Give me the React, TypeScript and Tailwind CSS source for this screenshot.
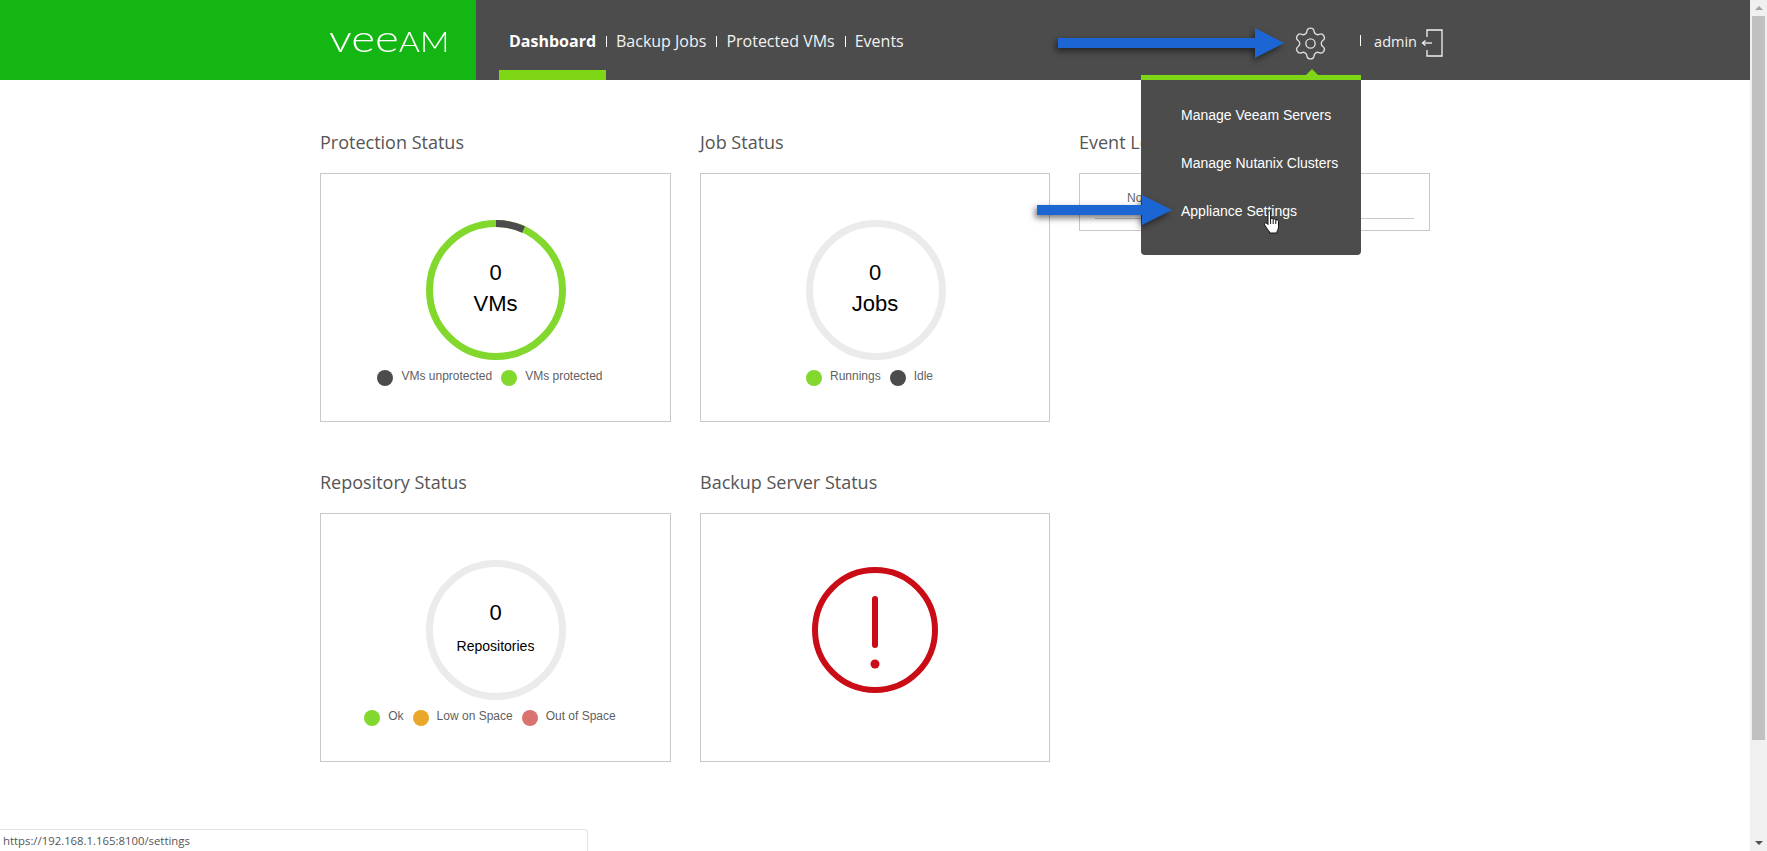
import { Settings } from "lucide-react";

const openSans = "font-['Open_Sans',sans-serif]";
const arial = "font-['Liberation_Sans',Arial,sans-serif]";

function Ring({ slice }: { slice?: boolean }) {
  const r = 66.5;
  const c = 2 * Math.PI * r;
  return (
    <svg width="140" height="140" viewBox="0 0 140 140" className="block">
      <circle cx="70" cy="70" r={r} fill="none" stroke={slice ? "#82d82d" : "#ebebeb"} strokeWidth="7" />
      {slice && (
        <circle
          cx="70"
          cy="70"
          r={r}
          fill="none"
          stroke="#4c4c4c"
          strokeWidth="7"
          strokeDasharray={`${c * 0.068} ${c}`}
          transform="rotate(-90 70 70)"
        />
      )}
    </svg>
  );
}

function Legend({ items }: { items: { color: string; label: string }[] }) {
  return (
    <div className="flex items-center gap-[9px] pr-[11px] mt-[9px] h-[17px]">
      {items.map((it) => (
        <div key={it.label} className="flex items-center gap-[8px]">
          <span className={`w-[16px] h-[16px] rounded-full ${it.color}`} />
          <span className={`${arial} text-[12px] leading-[17px] pb-[3px] text-[#5f5f5f]`}>{it.label}</span>
        </div>
      ))}
    </div>
  );
}

function StatCard({
  count,
  label,
  small,
  slice,
  nudge,
  items,
}: {
  count: string;
  label: string;
  small?: boolean;
  slice?: boolean;
  nudge?: boolean;
  items: { color: string; label: string }[];
}) {
  return (
    <div className="h-[249px] border border-[#c8c8c8] flex flex-col items-center pt-[46px]">
      <div className={`relative w-[140px] h-[140px] ${nudge ? "ml-[2px]" : ""}`}>
        <Ring slice={slice} />
        <div className={`absolute inset-0 flex flex-col items-center pt-[38px] text-black ${arial} ${nudge ? "pr-[2px]" : ""}`}>
          <span className="text-[22px] leading-[30px]">{count}</span>
          {small ? (
            <span className="text-[14px] leading-[30px] mt-[3px]">{label}</span>
          ) : (
            <span className="text-[22px] leading-[30px] mt-[1px]">{label}</span>
          )}
        </div>
      </div>
      <Legend items={items} />
    </div>
  );
}

function Panel({ title, children }: { title: string; children: React.ReactNode }) {
  return (
    <div>
      <h3 className={`${openSans} text-[18px] leading-[24px] mb-[19px] text-[#555555]`}>{title}</h3>
      {children}
    </div>
  );
}

function BlueArrow({ width, shaft }: { width: number; shaft: number }) {
  return (
    <svg width={width + 8} height="40" viewBox={`0 0 ${width + 8} 40`} className="drop-shadow-[-2px_3px_3px_rgba(0,0,0,0.55)]">
      <path d={`M0 10 H${shaft} V0 L${width} 15 L${shaft} 30 V20 H0 Z`} fill="#1c66d4" />
    </svg>
  );
}

export default function App() {
  return (
    <div className="relative flex h-screen overflow-hidden bg-white">
      <div className="flex-1 min-w-0">
        {/* top bar */}
        <header className="flex h-20 bg-[#4c4c4c]">
          <div className="w-[476px] bg-[#14b614] flex justify-end items-center pr-[27px] pb-[7px]">
            <div className="flex items-baseline font-['Lato',sans-serif] font-light text-white leading-none scale-x-[1.2] origin-right">
              <span className="text-[38px]">vee</span>
              <span className="text-[27px]">AM</span>
            </div>
          </div>
          <nav className={`flex items-start pl-[23px] text-white text-[16px] ${openSans}`}>
            <div className="relative h-20 w-[107px] pl-[10px] pt-[29px] leading-[24px] font-bold">
              Dashboard
              <span className="absolute left-0 right-0 bottom-0 h-[10px] bg-[#7ed616]" />
            </div>
            <span className="w-px h-[11px] bg-white mt-[36px]" />
            <span className="pl-[9px] pr-[10px] pt-[29px] leading-[24px] text-[#f2f2f2]">Backup Jobs</span>
            <span className="w-px h-[11px] bg-white mt-[36px]" />
            <span className="pl-[9px] pr-[10px] pt-[29px] leading-[24px] text-[#f2f2f2]">Protected VMs</span>
            <span className="w-px h-[11px] bg-white mt-[36px]" />
            <span className="pl-[9px] pt-[29px] leading-[24px] text-[#f2f2f2]">Events</span>
          </nav>
          <div className="ml-auto flex items-start pr-[307px]">
            <Settings size={37} strokeWidth={0.9} className="mt-[25px] mr-[31px] text-[#dcdcdc]" />
            <span className="w-px h-[11px] bg-white mt-[35px]" />
            <span className={`${openSans} text-[14.5px] leading-[20px] mt-[32px] ml-[13px] text-[#f2f2f2]`}>admin</span>
            <svg width="22" height="28" viewBox="0 0 22 28" className="mt-[29px] ml-[4px]" fill="none" stroke="#f2f2f2" strokeWidth="1.3">
              <path d="M6 8 V1 H21 V27 H6 V21" />
              <path d="M1.5 14 H11" />
              <path d="M4.5 11.5 L1.5 14 L4.5 16.5" />
            </svg>
          </div>
        </header>

        {/* dashboard panels */}
        <main className="w-[1110px] mx-auto pt-[50px] grid grid-cols-[351px_350px_351px] gap-x-[29px] gap-y-[48px] items-start">
          <Panel title="Protection Status">
            <StatCard
              count="0"
              label="VMs"
              slice
              items={[
                { color: "bg-[#4c4c4c]", label: "VMs unprotected" },
                { color: "bg-[#82d82d]", label: "VMs protected" },
              ]}
            />
          </Panel>
          <Panel title="Job Status">
            <StatCard
              count="0"
              label="Jobs"
              nudge
              items={[
                { color: "bg-[#82d82d]", label: "Runnings" },
                { color: "bg-[#4c4c4c]", label: "Idle" },
              ]}
            />
          </Panel>
          <Panel title="Event Log">
            <div className="h-[58px] border border-[#c8c8c8] px-[15px]">
              <div className={`${arial} h-[45px] border-b border-[#c8c8c8] text-[12px] text-[#666666] pl-[32px] pt-[16px] leading-[16px]`}>
                No data available
              </div>
            </div>
          </Panel>
          <Panel title="Repository Status">
            <StatCard
              count="0"
              label="Repositories"
              small
              items={[
                { color: "bg-[#82d82d]", label: "Ok" },
                { color: "bg-[#eaa82a]", label: "Low on Space" },
                { color: "bg-[#d87370]", label: "Out of Space" },
              ]}
            />
          </Panel>
          <Panel title="Backup Server Status">
            <div className="h-[249px] border border-[#c8c8c8] flex items-center justify-center pb-[15px]">
              <svg width="126" height="126" viewBox="0 0 126 126" fill="none" stroke="#c90c16">
                <circle cx="63" cy="63" r="60" strokeWidth="6" />
                <path d="M63 32 V78" strokeWidth="6" strokeLinecap="round" />
                <circle cx="63" cy="97" r="4.5" fill="#c90c16" stroke="none" />
              </svg>
            </div>
          </Panel>
        </main>
      </div>

      {/* scrollbar */}
      <div className="w-[17px] shrink-0 bg-[#f0f0f0] flex flex-col items-center">
        <div className="h-4 w-full flex items-center justify-center">
          <span className="w-0 h-0 border-x-[4px] border-x-transparent border-b-[4px] border-b-[#a3a3a3]" />
        </div>
        <div className="w-[13px] h-[724px] bg-[#c0c0c0]" />
        <div className="mt-auto h-4 w-full flex items-center justify-center">
          <span className="w-0 h-0 border-x-[4px] border-x-transparent border-t-[4px] border-t-[#505050]" />
        </div>
      </div>

      {/* text that sits behind the top arrow */}
      <span className={`${openSans} absolute left-[1120px] top-[34px] text-[13px] leading-[18px] text-[#c8c8c8]`}>
        Version 2.0.0.000
      </span>

      {/* settings menu */}
      <div className="absolute left-[1141px] top-[75px] w-[220px] h-[180px] bg-[#4c4c4c] border-t-[5px] border-[#7ed616] rounded-b-[4px] pt-[11px]">
        <span className="absolute left-[165px] -top-[11px] w-0 h-0 border-x-[6px] border-x-transparent border-b-[6px] border-b-[#7ed616]" />
        {["Manage Veeam Servers", "Manage Nutanix Clusters", "Appliance Settings"].map((item) => (
          <div key={item} className={`${arial} pl-[40px] h-[48px] leading-[48px] text-[14px] text-white`}>
            {item}
          </div>
        ))}
      </div>

      {/* callout arrows */}
      <div className="absolute left-[1058px] top-[28px]">
        <BlueArrow width={226} shaft={197} />
      </div>
      <div className="absolute left-[1037px] top-[195px]">
        <BlueArrow width={135} shaft={105} />
      </div>

      {/* mouse cursor */}
      <svg width="18" height="24" viewBox="0 0 18 24" className="absolute left-[1263px] top-[210px]" fill="#ffffff" stroke="#111111" strokeWidth="1" strokeLinejoin="round">
        <path d="M5 1.8 C5 0.3 7.6 0.3 7.6 1.8 V9 C8 8 10 8 10.2 9.4 C10.8 8.6 12.6 8.8 12.8 10.2 C13.6 9.6 15.5 10 15.5 11.6 V16.5 C15.5 19 14.5 20 14 21.5 V23 H6.5 V21.8 C5 20 3.5 18 1.6 14.8 C0.8 13.3 2.6 12 4 13.4 L5 14.6 Z" />
        <path d="M7.6 9 V14 M10.2 9.4 V14 M12.8 10.2 V14" fill="none" />
      </svg>

      {/* link status bubble */}
      <div className="absolute left-0 bottom-0 w-[588px] h-[22px] bg-white border-t border-r border-[#e2e2e2] rounded-tr-[4px] pl-[3px]">
        <span className={`${openSans} text-[11.35px] leading-[22px] block text-[#555555]`}>https://192.168.1.165:8100/settings</span>
      </div>
    </div>
  );
}
